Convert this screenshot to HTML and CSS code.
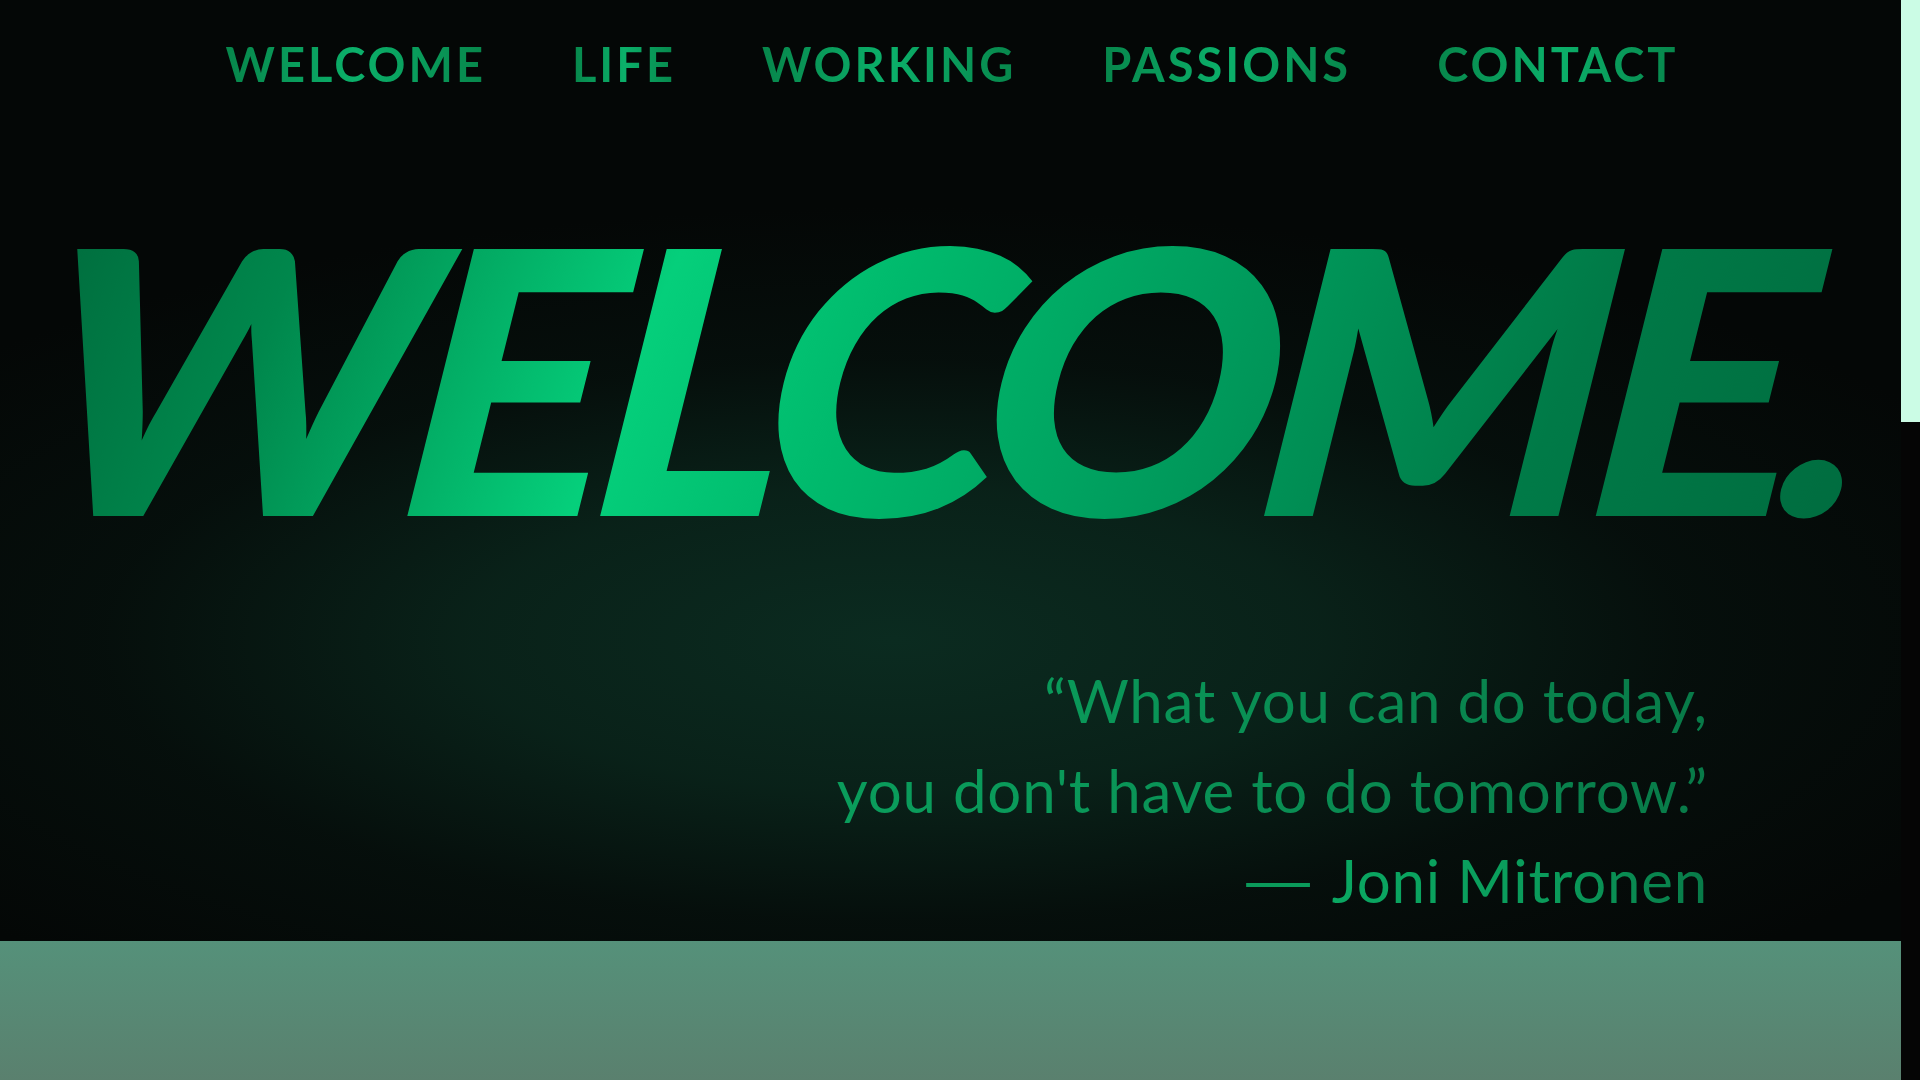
FILE: index.html
```html
<!DOCTYPE html>
<html lang="en">
<head>
<meta charset="utf-8">
<title>Welcome</title>
<link rel="stylesheet" href="styles.css">
</head>
<body>
<div class="page">
  <main class="content">
    <header class="hero">
      <nav class="nav">
        <a class="nav-link" href="#welcome">WELCOME</a>
        <a class="nav-link" href="#life">LIFE</a>
        <a class="nav-link" href="#working">WORKING</a>
        <a class="nav-link" href="#passions">PASSIONS</a>
        <a class="nav-link" href="#contact">CONTACT</a>
      </nav>
      <h1 class="title"><span class="title-text">WELCOME.</span></h1>
      <blockquote class="quote">
        <p class="quote-text">“What you can do today,<br>you don't have to do tomorrow.”</p>
        <p class="quote-author"><span class="dash">—</span> <span class="author-name">Joni Mitronen</span></p>
      </blockquote>
    </header>
    <section class="next" id="life"></section>
  </main>
  <div class="scrollbar"><div class="scrollbar-thumb"></div></div>
</div>
</body>
</html>
```
FILE: styles.css
```css
html, body {
  margin: 0;
  height: 100%;
  overflow: hidden;
  background: #040706;
}
body {
  font-family: "Lato", "Open Sans", sans-serif;
  color: #0a9a5a;
}
.page {
  display: flex;
  height: 1080px;
}
.content {
  flex: 1;
  min-width: 0;
  display: flex;
  flex-direction: column;
}
.scrollbar {
  width: 19px;
  flex: none;
  background: #050505;
}
.scrollbar-thumb {
  height: 422px;
  background: #cbfce5;
}
.hero {
  height: 941px;
  flex: none;
  box-sizing: border-box;
  padding-top: 41px;
  display: flex;
  flex-direction: column;
  background:
    radial-gradient(ellipse 64% 46% at 47% 68%, rgba(11, 43, 32, 1) 0%, rgba(10, 38, 28, 0.85) 35%, rgba(7, 22, 17, 0.5) 65%, rgba(4, 7, 6, 0) 100%),
    #040706;
}
.nav {
  display: flex;
  justify-content: center;
  gap: 89px;
  line-height: 1;
}
.nav-link {
  font-size: 47px;
  font-weight: 700;
  letter-spacing: 3px;
  margin-right: -3px;
  text-decoration: none;
  background: linear-gradient(90deg, #07864b 0%, #0bb06a 50%, #07864b 100%);
  -webkit-background-clip: text;
  background-clip: text;
  color: transparent;
}
.title {
  margin: 102px 0 0;
  font-size: 368px;
  font-weight: 900;
  line-height: 1;
  text-align: center;
  letter-spacing: -0.05em;
}
.title-text {
  display: inline-block;
  padding: 0 76px 0 44px;
  transform: skewX(-14deg);
  background: linear-gradient(100deg, #006a3c 0%, #00874c 14%, #05cf7b 33%, #00b96c 45%, #009e5e 60%, #007a47 80%, #006a3e 100%);
  -webkit-background-clip: text;
  background-clip: text;
  color: transparent;
}
.quote {
  margin: 97px 0 0;
  padding-right: 193px;
  text-align: right;
  font-size: 60px;
  font-weight: 400;
  line-height: 90px;
  letter-spacing: 0.8px;
}
.quote p {
  margin: 0;
}
.quote-text, .author-name {
  background: linear-gradient(90deg, #0aa862 0%, #0a9a5a 60%, #087a48 100%);
  -webkit-background-clip: text;
  background-clip: text;
  color: transparent;
}
.dash {
  display: inline-block;
  color: #0a9a5a;
  transform: scaleX(1.6);
  transform-origin: right center;
  margin-left: 24px;
}
.next {
  flex: 1;
  background: linear-gradient(180deg, #55917a 0px, #5a806e 140px);
}
```
